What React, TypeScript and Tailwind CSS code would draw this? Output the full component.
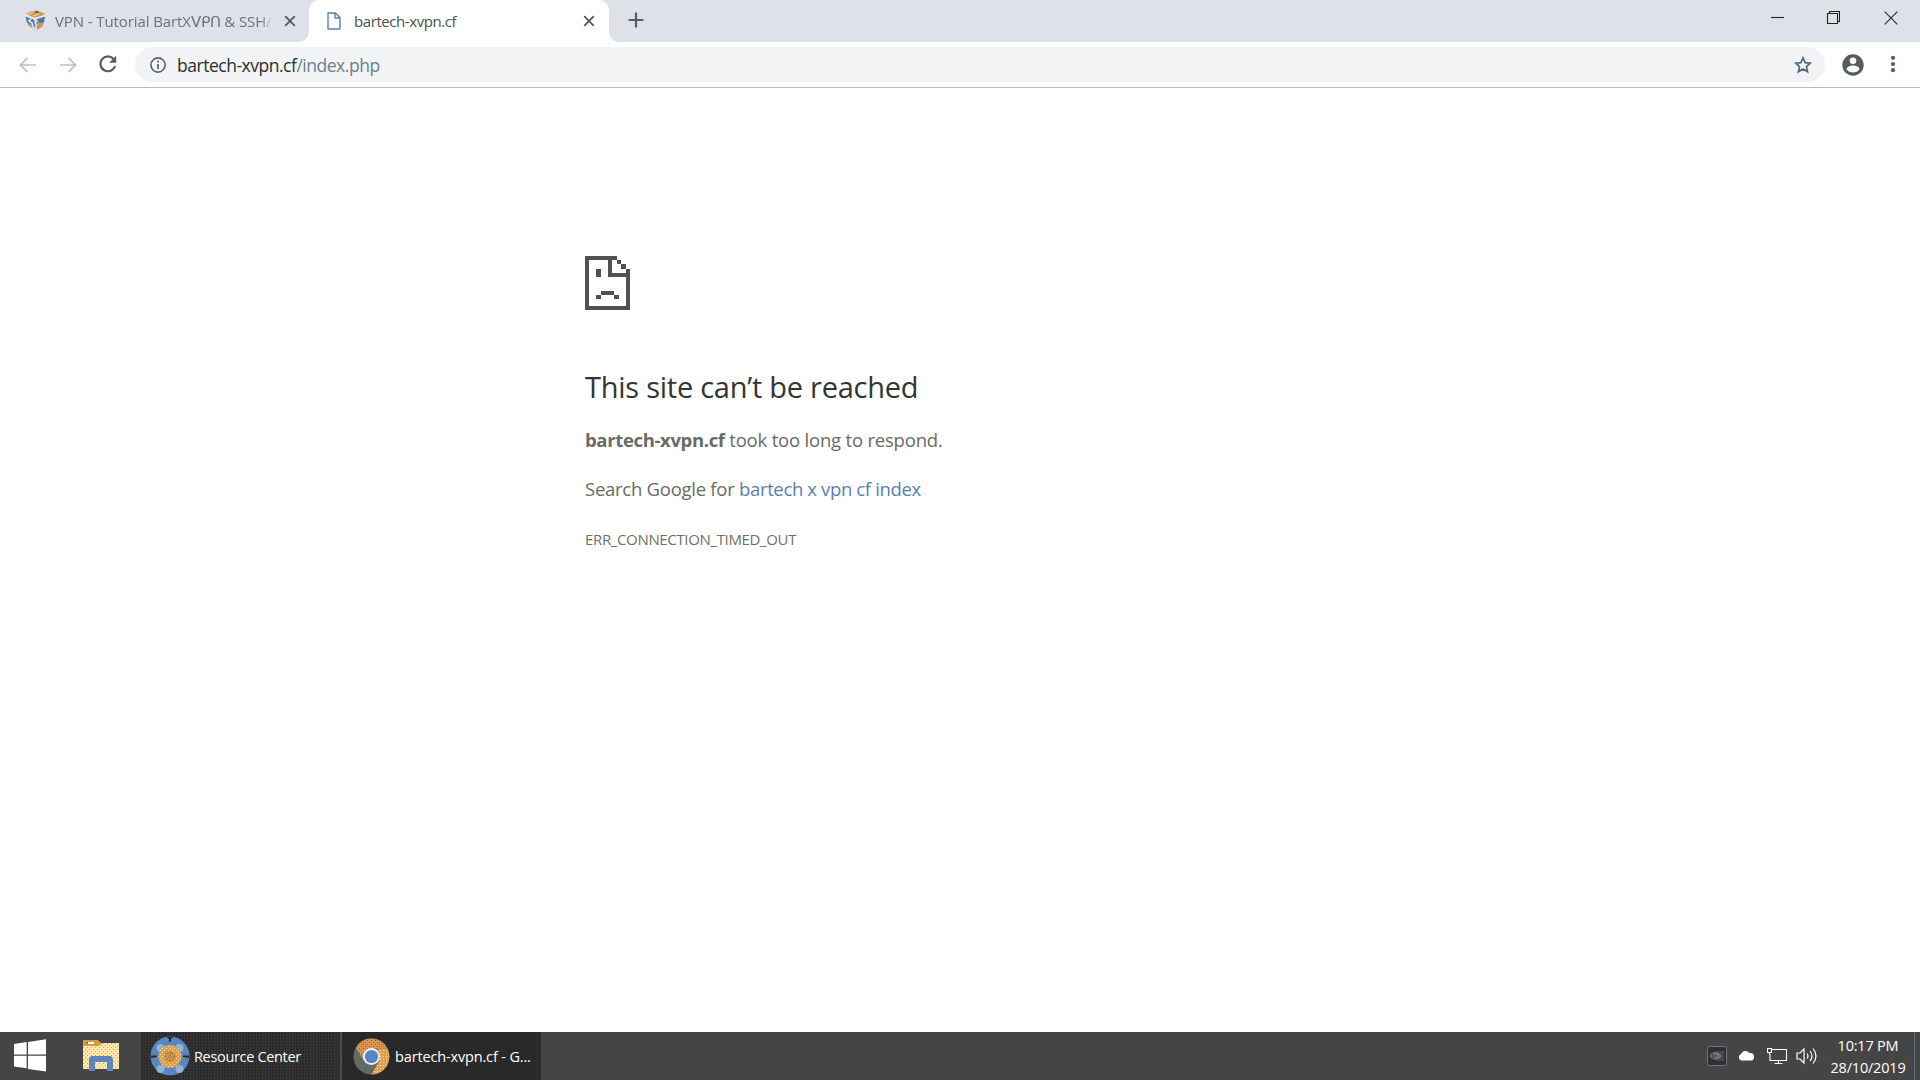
import React from "react";

const UI_FONT = "font-['Open_Sans','Noto_Sans',sans-serif]";

function CubeIcon() {
  return (
    <svg width="22" height="22" viewBox="0 0 22 22" className="shrink-0">
      <path d="M1 3.500L6 1.500h9l5 2.500-5 3-5 1-5-2z" fill="#d19a4e" />
      <path d="M9 1.500l3-.7 2 1.200-2 1.200z" fill="#4f5a66" />
      <path d="M3 4l5-1M8 6l6-2" stroke="#e9dcc6" strokeWidth="1" />
      <path d="M.5 6.500L9 9.500l1.500 8L2 13z" fill="#4a7fbd" />
      <path d="M20 6.500L12 9l-.5 5.500 7.500-2z" fill="#4e77a8" />
      <path d="M1 5.500l8 3 11-3" stroke="#f2f5f8" strokeWidth="1.200" fill="none" />
      <path d="M6 8.500L4 11l3 2 1 4" stroke="#eef2f6" strokeWidth="1.500" fill="none" />
      <path d="M12 14l7-2-1.500 4.500L12 20z" fill="#cf9752" />
      <path d="M11.500 11l2.500 2M7 17l3 3" stroke="#dccdb4" strokeWidth="1.800" strokeDasharray="1.500 1" />
      <path d="M3 14l4 3" stroke="#c9984f" strokeWidth="1.800" />
    </svg>
  );
}

function CloseX({ className = "" }: { className?: string }) {
  return (
    <svg width="12" height="12" viewBox="0 0 12 12" className={className}>
      <path d="M1.2 1.2l9.6 9.6M10.8 1.2L1.2 10.8" stroke="#535a60" strokeWidth="1.9" fill="none" />
    </svg>
  );
}

function TabStrip() {
  return (
    <div className="flex h-[42px] bg-[#dee1e8]">
      <div className="flex w-[309px] shrink-0 items-center pl-[25px]">
        <CubeIcon />
        <div className="ml-[8px] w-[218px] whitespace-nowrap text-[15px] leading-[20px] tracking-[-0.1px] text-[#6c7277] [mask-image:linear-gradient(to_right,black_94%,transparent)]">
          VPN - Tutorial BartXᐯᑭᑎ &amp; SSH/
        </div>
        <CloseX className="ml-[11px]" />
      </div>
      <div className="relative flex w-[300px] shrink-0 items-center rounded-t-[10px] bg-white pl-[18px]">
        <span className="absolute -left-[10px] bottom-0 size-[10px] bg-[radial-gradient(circle_at_0_0,#dee1e8_9.5px,#fff_10px)]" />
        <span className="absolute -right-[10px] bottom-0 size-[10px] bg-[radial-gradient(circle_at_100%_0,#dee1e8_9.5px,#fff_10px)]" />
        <svg width="14" height="18" viewBox="0 0 14 18">
          <path d="M1 1h7.5L13 5.5V17H1z M8 1v5h5" fill="none" stroke="#5d82ad" strokeWidth="1.4" strokeLinejoin="round" />
        </svg>
        <span className="ml-[13px] w-[218px] whitespace-nowrap text-[15px] leading-[20px] tracking-[-0.42px] text-[#4c4f4c]">bartech-xvpn.cf</span>
        <CloseX className="ml-[11px]" />
      </div>
      <svg width="16" height="16" viewBox="0 0 16 16" className="ml-[19px] mt-[12px]">
        <path d="M8 .5v15M.5 8h15" stroke="#535e69" strokeWidth="2.2" />
      </svg>
      <div className="ml-auto flex pr-[22px] pt-[11px]">
        <svg width="14" height="14" viewBox="0 0 14 14">
          <path d="M1 6.500h13" stroke="#222" strokeWidth="1.1" />
        </svg>
        <svg width="14" height="14" viewBox="0 0 14 14" className="ml-[42px]">
          <path d="M1.500 2.500h10v10h-10zM3.500 2.500v-2h10v10h-2" fill="none" stroke="#222" strokeWidth="1.1" />
        </svg>
        <svg width="14" height="14" viewBox="0 0 14 14" className="ml-[44px]">
          <path d="M.7.7l12.6 12.6M13.3.7L.7 13.3" stroke="#252c36" strokeWidth="1.2" />
        </svg>
      </div>
    </div>
  );
}

function Toolbar() {
  return (
    <div className="flex h-[46px] items-center border-b border-[#aebfcc] pl-[19px] pr-[24px]">
      <svg width="18" height="16" viewBox="0 0 18 16">
        <path d="M17 8H2M8.5 1L1.5 8l7 7" fill="none" stroke="#b3c0cb" strokeWidth="1.7" />
      </svg>
      <svg width="18" height="16" viewBox="0 0 18 16" className="ml-[22px]">
        <path d="M1 8h15M9.500 1l7 7-7 7" fill="none" stroke="#b3c0cb" strokeWidth="1.7" />
      </svg>
      <svg width="18" height="18" viewBox="0 0 18 18" className="-mt-px ml-[22px]">
        <path d="M15 4.600A7.400 7.400 0 1 0 16 11" fill="none" stroke="#535c66" strokeWidth="2.1" />
        <path d="M17.200 .7V7.800H10.200z" fill="#535c66" />
      </svg>
      <div className="ml-[18px] flex h-[35px] flex-1 items-center rounded-full bg-[#f1f3f4] pl-[15px] pr-[13px]">
        <svg width="16" height="16" viewBox="0 0 16 16">
          <circle cx="8" cy="8" r="7.100" fill="none" stroke="#5a6167" strokeWidth="1.600" />
          <path d="M8 7v5M8 3.800v1.800" stroke="#5a6167" strokeWidth="1.700" />
        </svg>
        <span className="ml-[11px] text-[17.500px] leading-[24px] tracking-[-0.48px] text-[#2c2f30]">
          bartech-xvpn.cf<span className="text-[#6b7f90]">/index.php</span>
        </span>
        <svg width="18" height="18" viewBox="0 0 18 18" className="ml-auto">
          <path d="M9 1.900l2.150 4.700 5.200.55-3.900 3.500 1.100 5.100L9 13.100l-4.550 2.650 1.100-5.100-3.900-3.500 5.200-.55z" fill="none" stroke="#526880" strokeWidth="1.700" />
        </svg>
      </div>
      <svg width="22" height="22" viewBox="0 0 22 22" className="ml-[17px]">
        <circle cx="11" cy="11" r="10.700" fill="#555b5e" />
        <circle cx="11" cy="6.700" r="3.300" fill="#fff" />
        <path d="M4.500 15.200c0-2.500 4-3.700 6.500-3.700s6.500 1.200 6.500 3.700c-1.500 2-3.600 3.300-6.500 3.300s-5-1.300-6.500-3.300z" fill="#fff" />
      </svg>
      <svg width="6" height="18" viewBox="0 0 6 18" className="-mt-px ml-[26px]">
        <circle cx="3" cy="2.800" r="2.100" fill="#565f68" />
        <circle cx="3" cy="9" r="2.100" fill="#565f68" />
        <circle cx="3" cy="15.200" r="2.100" fill="#565f68" />
      </svg>
    </div>
  );
}

function ErrorPage() {
  return (
    <main className="flex-1 bg-white pl-[585px] pt-[168px]">
      <svg width="45" height="54" viewBox="0 0 45 54" shapeRendering="crispEdges" fill="#505252">
        <path d="M0 0H32V4H4V50H41V13H45V54H0z" />
        <path d="M23 0h4v17h18v4H23z" />
        <path d="M32 4h4v4h-4zM36 8h5v5h-5zM11 13h5v8h-5zM16 35h13v4H16zM11 39h5v4h-5zM29 39h5v4h-5z" />
      </svg>
      <h1 className="mt-[57px] whitespace-nowrap text-[29px] leading-[40px] tracking-[-0.25px] text-[#333533]">This site can’t be reached</h1>
      <p className="mt-[19px] whitespace-nowrap text-[18.500px] leading-[28px] tracking-[-0.2px] text-[#696b64]">
        <b className="tracking-[-0.35px]">bartech-xvpn.cf</b> took too long to respond.
      </p>
      <p className="mt-[21px] whitespace-nowrap text-[18.500px] leading-[28px] tracking-[-0.26px] text-[#696b64]">
        Search Google for <a className="tracking-[-0.36px] text-[#5980b0]">bartech x vpn cf index</a>
      </p>
      <p className="mt-[25px] whitespace-nowrap text-[15px] leading-[22px] tracking-[-0.35px] text-[#706f66]">ERR_CONNECTION_TIMED_OUT</p>
    </main>
  );
}

function ResourceIcon() {
  return (
    <svg width="40" height="40" viewBox="0 0 40 40">
      <defs>
        <pattern id="speckle" width="4" height="4" patternUnits="userSpaceOnUse">
          <rect width="4" height="4" fill="#dca04e" />
          <rect width="1" height="1" fill="#ffe09a" />
          <rect x="2" y="2" width="1" height="1" fill="#ffe09a" />
        </pattern>
      </defs>
      <circle cx="20" cy="20" r="19.500" fill="#5a86bf" />
      <g fill="#90b2d6">
        <circle cx="10.500" cy="12" r="4" />
        <circle cx="29.500" cy="12" r="4" />
        <circle cx="10.500" cy="33" r="4" />
        <circle cx="29.500" cy="33" r="4" />
      </g>
      <path d="M16 .8h8l-3 2v3h-2v-3zM1 19.500h6v1.500l-6 1zM39 19.500h-6v1.500l6 1z" fill="#252a30" />
      <circle cx="20" cy="20.500" r="11.500" fill="url(#speckle)" />
      <circle cx="20" cy="20.500" r="6" fill="#cf9345" />
      <circle cx="20" cy="20.500" r="4" fill="none" stroke="#76614a" strokeDasharray="1 2" />
      <circle cx="20" cy="20.500" r="1.500" fill="none" stroke="#76614a" strokeDasharray="1 2" />
    </svg>
  );
}

function FolderIcon() {
  return (
    <svg width="37" height="32" viewBox="0 0 37 32">
      <defs>
        <pattern id="folderDots" width="4" height="4" patternUnits="userSpaceOnUse">
          <rect width="4" height="4" fill="#fbe7a8" />
          <rect width="1" height="1" fill="#dba552" />
          <rect x="2" y="2" width="1" height="1" fill="#dba552" />
        </pattern>
      </defs>
      <path d="M0 1h15l3 3v4H0z" fill="#d89a45" />
      <path d="M3 3h8v2H3z" fill="#fff" />
      <path d="M3 3h2v2H3z" fill="#5a7896" />
      <path d="M0 7h16l3-3h17v26H0z" fill="url(#folderDots)" />
      <path d="M6 32V20l2-3h20l2 3v12h-6v-9H12v9z" fill="#5b87bd" />
    </svg>
  );
}

function ChromeIcon() {
  return (
    <svg width="37" height="37" viewBox="0 0 37 37">
      <defs>
        <pattern id="chromeDots" width="3" height="3" patternUnits="userSpaceOnUse">
          <rect width="3" height="3" fill="#e0a14c" />
          <rect width="1" height="1" fill="#ffe6a0" />
        </pattern>
        <pattern id="chromeTop" width="4" height="4" patternUnits="userSpaceOnUse">
          <rect width="4" height="4" fill="#d39550" />
          <rect width="1" height="1" fill="#8c6a48" />
          <rect x="2" y="2" width="1" height="1" fill="#8c6a48" />
        </pattern>
      </defs>
      <circle cx="18.500" cy="18.500" r="18" fill="#636b66" />
      <path d="M18.500 .5A18 18 0 0 1 34.500 10.500H18.500L10.500 22 2.800 9.800A18 18 0 0 1 18.500 .5z" fill="url(#chromeTop)" />
      <path d="M34.500 10.500A18 18 0 0 1 18.500 36.500l8-14-2-12z" fill="url(#chromeDots)" />
      <circle cx="18.500" cy="18.500" r="8.500" fill="#f0f2f4" />
      <circle cx="18.500" cy="18.500" r="6.600" fill="#5686c5" />
    </svg>
  );
}

function Taskbar() {
  return (
    <footer className="flex h-[48px] bg-[#454545] text-white">
      <div className="flex w-[141px] shrink-0">
        <svg width="32" height="33" viewBox="0 0 32 33" className="ml-[14px] mt-[7px]" fill="#fff">
          <path d="M0 5l12.700-1.900V15.500H0zM14 2.900L32 .3V15.500H14zM0 16.800h12.700v12.500L0 27.400zM14 16.800h18V32.500l-18-2.600z" />
        </svg>
        <div className="ml-[37px] mt-[7px]"><FolderIcon /></div>
      </div>
      <div className="flex w-[199px] shrink-0 items-center bg-[#2d2d2d] bg-[conic-gradient(#393939_25%,#292929_0_50%,#303030_0_75%,#292929_0)] bg-[size:3px_3px] pl-[9px]">
        <ResourceIcon />
        <span className="ml-[4px] mt-[2px] whitespace-nowrap text-[14.500px] leading-[20px] tracking-[-0.33px]">Resource Center</span>
      </div>
      <div className="flex w-[201px] shrink-0 items-center border-l-2 border-[#4c4c4c] bg-[#292929] pl-[11px]">
        <ChromeIcon />
        <span className="ml-[5px] mt-[2px] whitespace-nowrap text-[14.500px] leading-[20px] tracking-[-0.15px]">bartech-xvpn.cf - G...</span>
      </div>
      <div className="ml-auto flex items-center">
        <svg width="20" height="20" viewBox="0 0 20 20">
          <rect x=".5" y=".5" width="19" height="19" rx="2" fill="#303030" stroke="#60788f" />
          <path d="M8 5h9v10H8z" fill="#484848" />
          <path d="M3 10c3-5 8-4 11 0-3 4-8 4-11 0zM6 10c2-3 4-2 6 0-2 2-4 2-6 0z" fill="none" stroke="#7c7c7c" strokeWidth="1.100" />
        </svg>
        <svg width="18" height="12" viewBox="0 0 18 12" className="-mt-[3px] ml-[10px]">
          <path d="M4 11.500a3.500 3.500 0 0 1 0-6.500A5 5 0 0 1 12.500 4 3.800 3.800 0 0 1 14 11.500z" fill="#fff" />
        </svg>
        <svg width="21" height="18" viewBox="0 0 21 18" className="ml-[12px]" fill="none" stroke="#fff" strokeWidth="1.100">
          <path d="M5 2.500h14.500v11H3V7M11.500 13.500v3M7.500 16.500h8M.5 1.500h4v4h-4zM2.500 5.500v2" />
        </svg>
        <svg width="22" height="20" viewBox="0 0 22 20" className="ml-[8px]" fill="none" stroke="#fff" strokeWidth="1.200">
          <path d="M1 7h3l4-4v14l-4-4H1zM11 7.500q2 2.500 0 5M14 5q4 5 0 10M17 2.500q6 7.500 0 15" />
        </svg>
        <div className="ml-[11px] mt-[2px] w-[78px] whitespace-nowrap text-center text-[14.500px] leading-[22px] tracking-[-0.2px]">
          <div>10:17 PM</div>
          <div>28/10/2019</div>
        </div>
        <div className="ml-[7px] h-full w-[6px] border-l border-[#627386]" />
      </div>
    </footer>
  );
}

export default function App() {
  return (
    <div className={`flex h-[1080px] w-[1920px] flex-col overflow-hidden bg-white ${UI_FONT}`}>
      <TabStrip />
      <Toolbar />
      <ErrorPage />
      <Taskbar />
    </div>
  );
}
